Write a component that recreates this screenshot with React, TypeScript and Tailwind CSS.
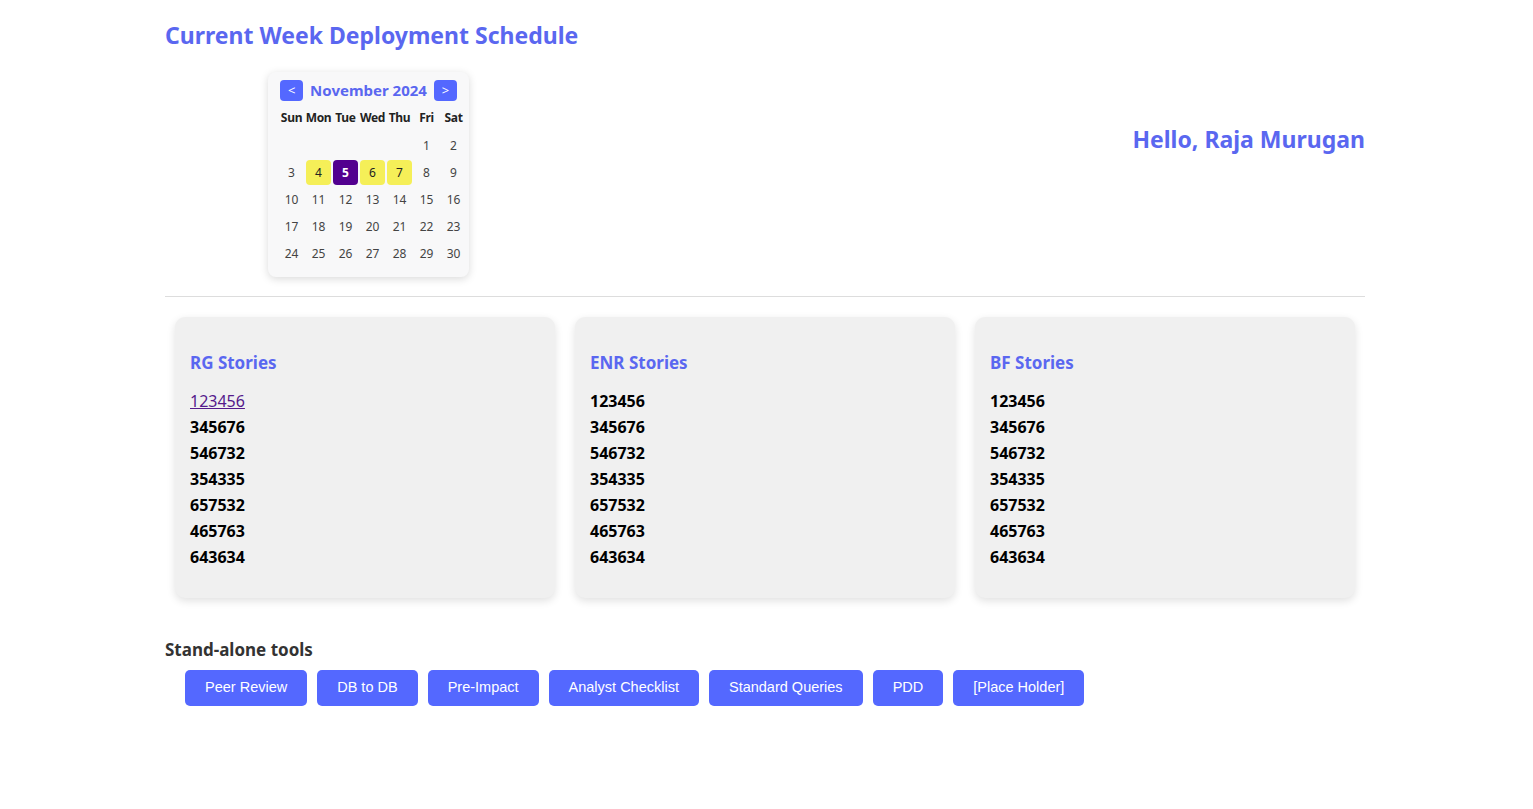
import React from "react";

const font = { fontFamily: '"Segoe UI", "Noto Sans", sans-serif' };

const days: (number | null)[] = [
  null, null, null, null, null, 1, 2,
  3, 4, 5, 6, 7, 8, 9,
  10, 11, 12, 13, 14, 15, 16,
  17, 18, 19, 20, 21, 22, 23,
  24, 25, 26, 27, 28, 29, 30,
];

const stories = ["123456", "345676", "546732", "354335", "657532", "465763", "643634"];

function Calendar() {
  return (
    <div className="w-[201px] bg-[#f8f8f9] rounded-lg shadow-[0_2px_8px_rgba(0,0,0,0.15)] pl-[10px] pr-[2px] pt-[8px] pb-[10px]">
      <div className="flex items-center justify-center gap-[7px] pr-[8px] h-[21px]">
        <button className="w-[23px] h-[21px] shrink-0 rounded bg-[#5468ff] text-white text-[13px] leading-none flex items-center justify-center">&lt;</button>
        <span className="text-[15px] font-bold text-[#5a67f0] whitespace-nowrap">November 2024</span>
        <button className="w-[23px] h-[21px] shrink-0 rounded bg-[#5468ff] text-white text-[13px] leading-none flex items-center justify-center">&gt;</button>
      </div>
      <div className="grid grid-cols-[repeat(7,27px)] mt-[6px]">
        {["Sun", "Mon", "Tue", "Wed", "Thu", "Fri", "Sat"].map((d) => (
          <div key={d} className="h-[22px] flex items-center justify-center text-[12px] font-bold text-[#222] tracking-[-0.3px]">{d}</div>
        ))}
      </div>
      <div className="grid grid-cols-[repeat(7,27px)] auto-rows-[27px] mt-[3px]">
        {days.map((d, i) => {
          const yellow = d === 4 || d === 6 || d === 7;
          const today = d === 5;
          return (
            <div key={i} className="flex items-center justify-center">
              {d !== null && (
                <div
                  className={
                    "w-[25px] h-[25px] rounded-[4px] flex items-center justify-center text-[12px] " +
                    (today
                      ? "bg-[#52008f] text-white font-bold"
                      : yellow
                      ? "bg-[#f5ef58] text-[#222]"
                      : "text-[#444]")
                  }
                >
                  {d}
                </div>
              )}
            </div>
          );
        })}
      </div>
    </div>
  );
}

function Card({ title, link }: { title: string; link?: boolean }) {
  return (
    <div className="bg-[#f0f0f0] rounded-[10px] shadow-[0_3px_8px_rgba(0,0,0,0.12)] px-[15px] pt-[34px] pb-[28px]">
      <h3 className="text-[17px] font-bold text-[#5a67f0] leading-[24px]">{title}</h3>
      <ul className="mt-[13px]">
        {stories.map((s, i) => (
          <li key={s} className="h-[26px] flex items-center text-[16px] leading-[26px]">
            {link && i === 0 ? (
              <a href="#" className="underline text-[#551a8b] font-normal">{s}</a>
            ) : (
              <span className="font-bold text-black">{s}</span>
            )}
          </li>
        ))}
      </ul>
    </div>
  );
}

export default function App() {
  const tools = ["Peer Review", "DB to DB", "Pre-Impact", "Analyst Checklist", "Standard Queries", "PDD", "[Place Holder]"];
  return (
    <div className="min-h-[809px] bg-white" style={font}>
      <div className="w-[1200px] ml-[165px] pt-[19px]">
        <h1 className="text-[23px] font-bold text-[#5a67f0] leading-[32px]">Current Week Deployment Schedule</h1>
        <div className="flex justify-between mt-[21px]">
          <div className="ml-[103px]">
            <Calendar />
          </div>
          <div className="mt-[51px] text-[23px] font-bold text-[#5a67f0] leading-[32px]">Hello, Raja Murugan</div>
        </div>
        <hr className="mt-[19px] border-t border-[#dddddd]" />
        <div className="grid grid-cols-3 gap-[20px] px-[10px] mt-[20px]">
          <Card title="RG Stories" link />
          <Card title="ENR Stories" />
          <Card title="BF Stories" />
        </div>
        <h2 className="mt-[40px] text-[17px] font-bold text-[#333] leading-[24px]">Stand-alone tools</h2>
        <div className="flex gap-[10px] ml-[20px] mt-[8px]">
          {tools.map((t) => (
            <button
              key={t}
              className="h-[36px] px-[20px] rounded-[5px] bg-[#5468ff] text-white text-[14.5px]"
              style={{ fontFamily: '"Liberation Sans", Arial, sans-serif' }}
            >
              {t}
            </button>
          ))}
        </div>
      </div>
    </div>
  );
}
